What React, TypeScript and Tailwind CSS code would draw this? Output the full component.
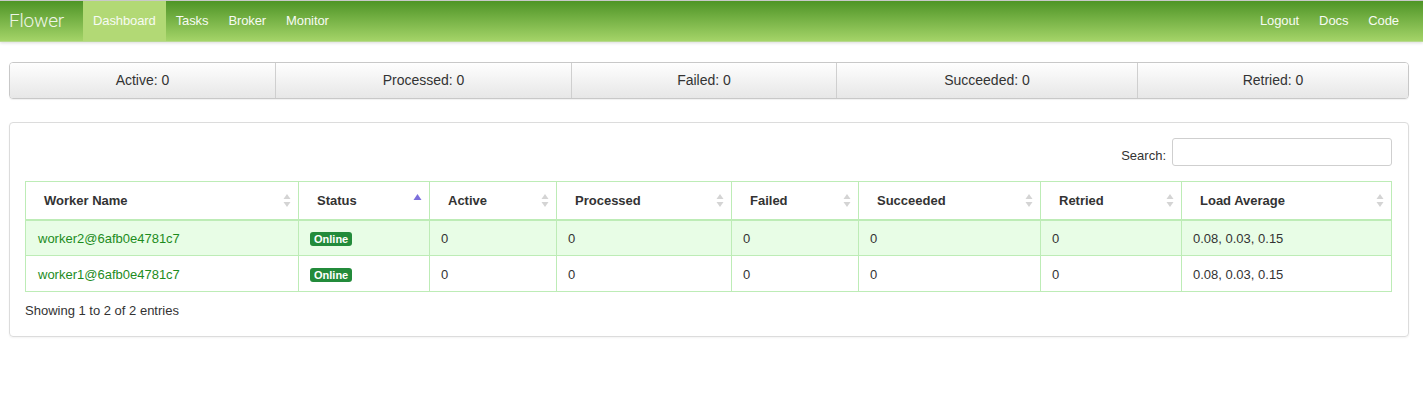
import React from "react";

const stats = [
  { label: "Active", value: 0, w: "w-[265px]" },
  { label: "Processed", value: 0, w: "w-[296px]" },
  { label: "Failed", value: 0, w: "w-[265px]" },
  { label: "Succeeded", value: 0, w: "w-[301px]" },
  { label: "Retried", value: 0, w: "flex-1" },
];

const columns = [
  { key: "name", label: "Worker Name", w: "w-[273px]" },
  { key: "status", label: "Status", w: "w-[131px]", sorted: true },
  { key: "active", label: "Active", w: "w-[127px]" },
  { key: "processed", label: "Processed", w: "w-[175px]" },
  { key: "failed", label: "Failed", w: "w-[127px]" },
  { key: "succeeded", label: "Succeeded", w: "w-[182px]" },
  { key: "retried", label: "Retried", w: "w-[141px]" },
  { key: "load", label: "Load Average", w: "w-[210px]" },
];

const workers = [
  { name: "worker2@6afb0e4781c7", active: 0, processed: 0, failed: 0, succeeded: 0, retried: 0, load: "0.08, 0.03, 0.15" },
  { name: "worker1@6afb0e4781c7", active: 0, processed: 0, failed: 0, succeeded: 0, retried: 0, load: "0.08, 0.03, 0.15" },
];

function SortBoth() {
  return (
    <svg width="8" height="15" viewBox="0 0 8 15" className="shrink-0">
      <path d="M4 1 L7.5 6 L0.5 6 Z" fill="#d4d4d4" />
      <path d="M4 14 L7.5 9 L0.5 9 Z" fill="#d4d4d4" />
    </svg>
  );
}

function SortAsc() {
  return (
    <svg width="9" height="15" viewBox="0 0 9 15" className="shrink-0 self-start mt-[2px]">
      <path d="M4.5 1 L8.5 7 L0.5 7 Z" fill="#7c6fdc" />
    </svg>
  );
}

export default function App() {
  return (
    <div className="min-h-[401px] bg-white text-[#333] font-['Liberation_Sans',Arial,sans-serif]">
      {/* NAVBAR */}
      <div className="h-[42px] border-t border-[#c9c9c9] border-b border-b-[#b7d98f] bg-gradient-to-b from-[#4e9525] to-[#a4d468] shadow-[0_1px_3px_rgba(0,0,0,0.15)] flex items-stretch">
        <div className="pl-[9px] pr-[19px] flex items-center text-[19px] font-light text-[#eef5e6] font-['Roboto',sans-serif] tracking-[-0.2px]">
          Flower
        </div>
        <nav className="flex items-stretch text-[13px] text-[#f7fbf3] tracking-[-0.1px]">
          <a className="px-[10px] flex items-center bg-[#b2d975]">Dashboard</a>
          <a className="px-[10px] flex items-center">Tasks</a>
          <a className="px-[10px] flex items-center">Broker</a>
          <a className="px-[10px] flex items-center">Monitor</a>
        </nav>
        <nav className="ml-auto flex items-stretch text-[13px] text-[#f7fbf3] pr-[14px] tracking-[-0.1px]">
          <a className="px-[10px] flex items-center">Logout</a>
          <a className="px-[10px] flex items-center">Docs</a>
          <a className="px-[10px] flex items-center">Code</a>
        </nav>
      </div>

      <div className="pl-[9px] w-[1409px]">
        {/* STATS */}
        <div className="mt-[20px] flex h-[37px] rounded-[4px] border border-[#c8c8c8] shadow-[0_1px_1px_rgba(0,0,0,0.06)] overflow-hidden">
          {stats.map((s, i) => (
            <div
              key={s.label}
              className={`${s.w} flex items-center justify-center text-[14px] text-[#333] bg-gradient-to-b from-[#fefefe] to-[#e7e7e7] ${i > 0 ? "border-l border-[#cfcfcf]" : ""}`}
            >
              {s.label}: {s.value}
            </div>
          ))}
        </div>

        {/* PANEL */}
        <div className="mt-[23px] w-[1400px] rounded-[4px] border border-[#dcdcdc] shadow-[0_1px_2px_rgba(0,0,0,0.05)] px-[15px] pt-[15px] pb-[15px]">
          <div className="flex justify-end items-center gap-[6px] pr-[1px]">
            <span className="mt-[8px] text-[13px] text-[#333]">Search:</span>
            <input className="w-[220px] h-[28px] rounded-[3px] border border-[#cfcfcf] bg-white outline-none" />
          </div>

          <table className="mt-[15px] w-[1366px] table-fixed border-collapse text-[13px]">
            <colgroup>
              {columns.map((c) => (
                <col key={c.key} className={c.w} />
              ))}
            </colgroup>
            <thead>
              <tr className="h-[38px] border border-[#bdecb6] border-b-[2px]">
                {columns.map((c, i) => (
                  <th
                    key={c.key}
                    className={`text-left font-bold text-[#333] pl-[18px] pr-[7px] ${i > 0 ? "border-l border-[#bdecb6]" : ""}`}
                  >
                    <div className="flex items-center justify-between">
                      <span>{c.label}</span>
                      {c.sorted ? <SortAsc /> : <SortBoth />}
                    </div>
                  </th>
                ))}
              </tr>
            </thead>
            <tbody>
              {workers.map((w, r) => (
                <tr key={w.name} className={`h-[36px] border border-[#bdecb6] ${r === 0 ? "bg-[#e8fde6]" : "bg-white"}`}>
                  <td className="pl-[12px] pt-[2px] text-[#1d8c1d]">{w.name}</td>
                  <td className="pl-[11px] pt-[2px] border-l border-[#bdecb6]">
                    <span className="inline-block rounded-[3px] bg-[#238b3b] px-[4px] py-[1px] text-[11px] font-bold leading-[12px] text-white">
                      Online
                    </span>
                  </td>
                  <td className="pl-[11px] pt-[2px] border-l border-[#bdecb6]">{w.active}</td>
                  <td className="pl-[11px] pt-[2px] border-l border-[#bdecb6]">{w.processed}</td>
                  <td className="pl-[11px] pt-[2px] border-l border-[#bdecb6]">{w.failed}</td>
                  <td className="pl-[11px] pt-[2px] border-l border-[#bdecb6]">{w.succeeded}</td>
                  <td className="pl-[11px] pt-[2px] border-l border-[#bdecb6]">{w.retried}</td>
                  <td className="pl-[11px] pt-[2px] border-l border-[#bdecb6]">{w.load}</td>
                </tr>
              ))}
            </tbody>
          </table>

          <div className="mt-[9px] text-[13px] text-[#333]">Showing 1 to 2 of 2 entries</div>
        </div>
      </div>
    </div>
  );
}
